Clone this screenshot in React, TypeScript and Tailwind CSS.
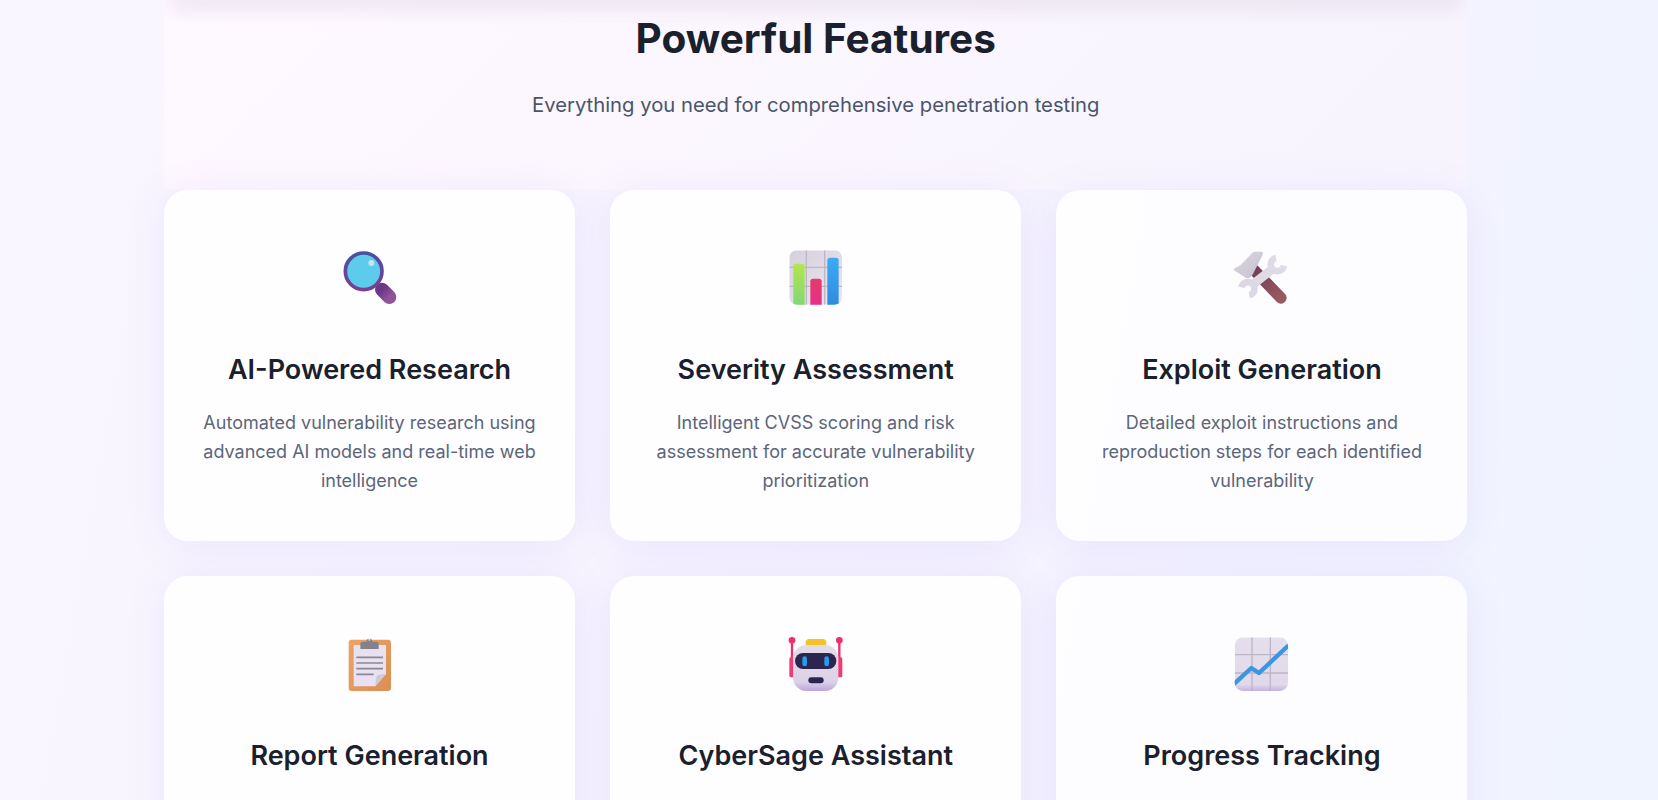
const features = [
  { title: 'AI-Powered Research', icon: <MagnifierIcon />, lines: ['Automated vulnerability research using', 'advanced AI models and real-time web', 'intelligence'] },
  { title: 'Severity Assessment', icon: <BarsIcon />, lines: ['Intelligent CVSS scoring and risk', 'assessment for accurate vulnerability', 'prioritization'] },
  { title: 'Exploit Generation', icon: <ToolsIcon />, lines: ['Detailed exploit instructions and', 'reproduction steps for each identified', 'vulnerability'] },
  { title: 'Report Generation', icon: <ClipboardIcon />, lines: [] },
  { title: 'CyberSage Assistant', icon: <RobotIcon />, lines: [] },
  { title: 'Progress Tracking', icon: <ChartIcon />, lines: [] },
]

function MagnifierIcon() {
  return (
    <svg viewBox="65 43 168 168" className="h-14 w-14 blur-[0.5px]">
      <defs>
        <linearGradient id="mg-ring" x1="0" y1="0" x2="0" y2="1">
          <stop offset="0" stopColor="#47509f" />
          <stop offset="1" stopColor="#7c3f91" />
        </linearGradient>
        <linearGradient id="mg-handle" x1="0" y1="0" x2="1" y2="1">
          <stop offset="0" stopColor="#6a3887" />
          <stop offset="1" stopColor="#8f5398" />
        </linearGradient>
      </defs>
      <line x1="185" y1="165" x2="207" y2="187" stroke="url(#mg-handle)" strokeWidth="42" strokeLinecap="round" />
      <circle cx="130" cy="110" r="55" fill="#5ccbec" stroke="url(#mg-ring)" strokeWidth="11" />
      <circle cx="153" cy="85" r="9" fill="#c7e4f4" />
    </svg>
  )
}

function BarsIcon() {
  return (
    <svg viewBox="53 43 168 168" className="h-14 w-14 blur-[0.5px]">
      <defs>
        <linearGradient id="br-bg" x1="0" y1="0" x2="1" y2="1">
          <stop offset="0" stopColor="#d5d0dc" />
          <stop offset="1" stopColor="#ebe7f0" />
        </linearGradient>
        <linearGradient id="br-green" x1="0" y1="0" x2="0" y2="1">
          <stop offset="0" stopColor="#b6e44e" />
          <stop offset="1" stopColor="#78d878" />
        </linearGradient>
        <linearGradient id="br-pink" x1="0" y1="0" x2="0" y2="1">
          <stop offset="0" stopColor="#e8386f" />
          <stop offset="1" stopColor="#e32f88" />
        </linearGradient>
        <linearGradient id="br-blue" x1="0" y1="0" x2="0" y2="1">
          <stop offset="0" stopColor="#3cabf6" />
          <stop offset="1" stopColor="#2f86dc" />
        </linearGradient>
        <clipPath id="br-clip">
          <rect x="57" y="47" width="158" height="163" rx="22" />
        </clipPath>
      </defs>
      <g clipPath="url(#br-clip)">
        <rect x="57" y="47" width="158" height="163" fill="url(#br-bg)" />
        <path d="M108 47V210M163 47V210M57 98H215M57 155H215" stroke="#bdb7c4" strokeWidth="4" />
        <rect x="69" y="87" width="34" height="140" rx="8" fill="url(#br-green)" />
        <rect x="120" y="132" width="34" height="100" rx="8" fill="url(#br-pink)" />
        <rect x="171" y="69" width="34" height="160" rx="8" fill="url(#br-blue)" />
      </g>
    </svg>
  )
}

function ToolsIcon() {
  return (
    <svg viewBox="73 43 168 168" className="h-14 w-14 blur-[0.5px]">
      <defs>
        <linearGradient id="tl-handle" x1="0" y1="0" x2="1" y2="1">
          <stop offset="0" stopColor="#743c58" />
          <stop offset="1" stopColor="#99595e" />
        </linearGradient>
        <linearGradient id="tl-head" x1="0" y1="0" x2="1" y2="1">
          <stop offset="0" stopColor="#dcd7e3" />
          <stop offset="1" stopColor="#c6c0cf" />
        </linearGradient>
      </defs>
      <line x1="132" y1="105" x2="214" y2="190" stroke="url(#tl-handle)" strokeWidth="34" strokeLinecap="round" />
      <path d="M72 103L92 92L128 54Q132 51 138 51H156Q162 52 159 60L130 118Q120 134 110 130L75 108Q70 106 72 103Z" fill="url(#tl-head)" />
      <path d="M122 155L195 98" stroke="#dfdbe6" strokeWidth="27" />
      <path d="M199 70A20 20 0 1 0 223 93" fill="none" stroke="#dfdbe6" strokeWidth="20" />
      <path d="M95 158A20 20 0 1 1 119 182" fill="none" stroke="#dcd7e4" strokeWidth="20" />
    </svg>
  )
}

function ClipboardIcon() {
  return (
    <svg viewBox="65 38 168 168" className="h-14 w-14 blur-[0.5px]">
      <defs>
        <linearGradient id="cb-board" x1="0" y1="0" x2="1" y2="1">
          <stop offset="0" stopColor="#e9a566" />
          <stop offset="1" stopColor="#dc8f52" />
        </linearGradient>
      </defs>
      <rect x="85" y="52" width="127" height="154" rx="9" fill="url(#cb-board)" />
      <path d="M100 68H197V155L165 192H100Z" fill="#e8e1f1" />
      <path d="M165 192L167 168Q168 158 178 157L197 155Z" fill="#cfc9d6" />
      <path d="M120 80V64Q120 58 128 58H138A9 9 0 1 1 156 58H168Q175 58 175 64V80Z" fill="#85808c" />
      <circle cx="147" cy="52" r="3" fill="#eadfe9" />
      <path d="M108 105H188M108 122H188M108 139H188M108 156H160" stroke="#8c8692" strokeWidth="5" />
    </svg>
  )
}

function RobotIcon() {
  return (
    <svg viewBox="53 38 168 168" className="h-14 w-14 blur-[0.5px]">
      <defs>
        <linearGradient id="rb-head" x1="0" y1="0" x2="0" y2="1">
          <stop offset="0" stopColor="#e2dbe8" />
          <stop offset="0.8" stopColor="#dcd2e6" />
          <stop offset="1" stopColor="#bda5e0" />
        </linearGradient>
      </defs>
      <path d="M65 55V120M207 55V120" stroke="#ee2f6c" strokeWidth="7" />
      <circle cx="65" cy="54" r="10" fill="#ee2f6c" />
      <circle cx="207" cy="54" r="10" fill="#ee2f6c" />
      <rect x="57" y="105" width="18" height="60" rx="5" fill="#f23b70" />
      <rect x="198" y="105" width="18" height="60" rx="5" fill="#f23b70" />
      <rect x="106" y="50" width="62" height="24" rx="11" fill="#f5c22e" />
      <rect x="68" y="68" width="136" height="138" rx="40" fill="url(#rb-head)" />
      <rect x="74" y="92" width="124" height="48" rx="24" fill="#2b2550" />
      <rect x="96" y="102" width="14" height="30" rx="7" fill="#2a9bec" />
      <rect x="162" y="102" width="14" height="30" rx="7" fill="#2a9bec" />
      <rect x="114" y="165" width="46" height="18" rx="9" fill="#2b2550" />
    </svg>
  )
}

function ChartIcon() {
  return (
    <svg viewBox="73 38 168 168" className="h-14 w-14 blur-[0.5px]">
      <defs>
        <linearGradient id="ch-bg" x1="0" y1="0" x2="0" y2="1">
          <stop offset="0" stopColor="#e5dfec" />
          <stop offset="0.88" stopColor="#e1d9ea" />
          <stop offset="1" stopColor="#c3b2de" />
        </linearGradient>
        <clipPath id="ch-clip">
          <rect x="75" y="45" width="160" height="161" rx="25" />
        </clipPath>
      </defs>
      <g clipPath="url(#ch-clip)">
        <rect x="75" y="45" width="160" height="161" fill="url(#ch-bg)" />
        <path d="M127 45V206M182 45V206M75 97H235M75 152H235" stroke="#bdb5c6" strokeWidth="4" />
        <path d="M70 188L125 137L148 152L240 66" fill="none" stroke="#3a96e2" strokeWidth="13" strokeLinejoin="round" />
      </g>
    </svg>
  )
}

export default function App() {
  return (
    <div className="h-[800px] overflow-hidden bg-[linear-gradient(100deg,#f9f6ff_0%,#f6f3fe_55%,#f0f4ff_100%)] pl-[164px] font-['Inter',sans-serif]">
      <div className="w-[1303.5px]">
        <header className="h-[190px] overflow-hidden bg-[linear-gradient(135deg,#fef8ff_0%,#f7f4fe_100%)] text-center">
          <div className="mx-[14px] h-0 shadow-[0_0_20px_8px_rgba(70,40,90,0.1)]" />
          <h2 className="pt-[14px] text-[40.5px] font-bold leading-[50px] text-[#1a202c]">Powerful Features</h2>
          <p className="mt-[25px] text-[20.25px] leading-[32px] text-[#4a5568]">Everything you need for comprehensive penetration testing</p>
        </header>
        <div className="grid grid-cols-3 gap-[35.2px]">
          {features.map((f) => (
            <div key={f.title} className="flex h-[351px] flex-col items-center rounded-[24px] bg-white/85 pt-[59px] text-center shadow-[0_4px_40px_rgba(124,92,246,0.1)]">
              {f.icon}
              <h3 className="mt-[45.3px] text-[27px] font-semibold leading-[40px] text-[#1a202c]">{f.title}</h3>
              <p className="mt-[17.7px] text-[18px] leading-[29px] text-[#5b667a]">
                {f.lines.map((l) => (
                  <span key={l} className="block">{l}</span>
                ))}
              </p>
            </div>
          ))}
        </div>
      </div>
    </div>
  )
}
